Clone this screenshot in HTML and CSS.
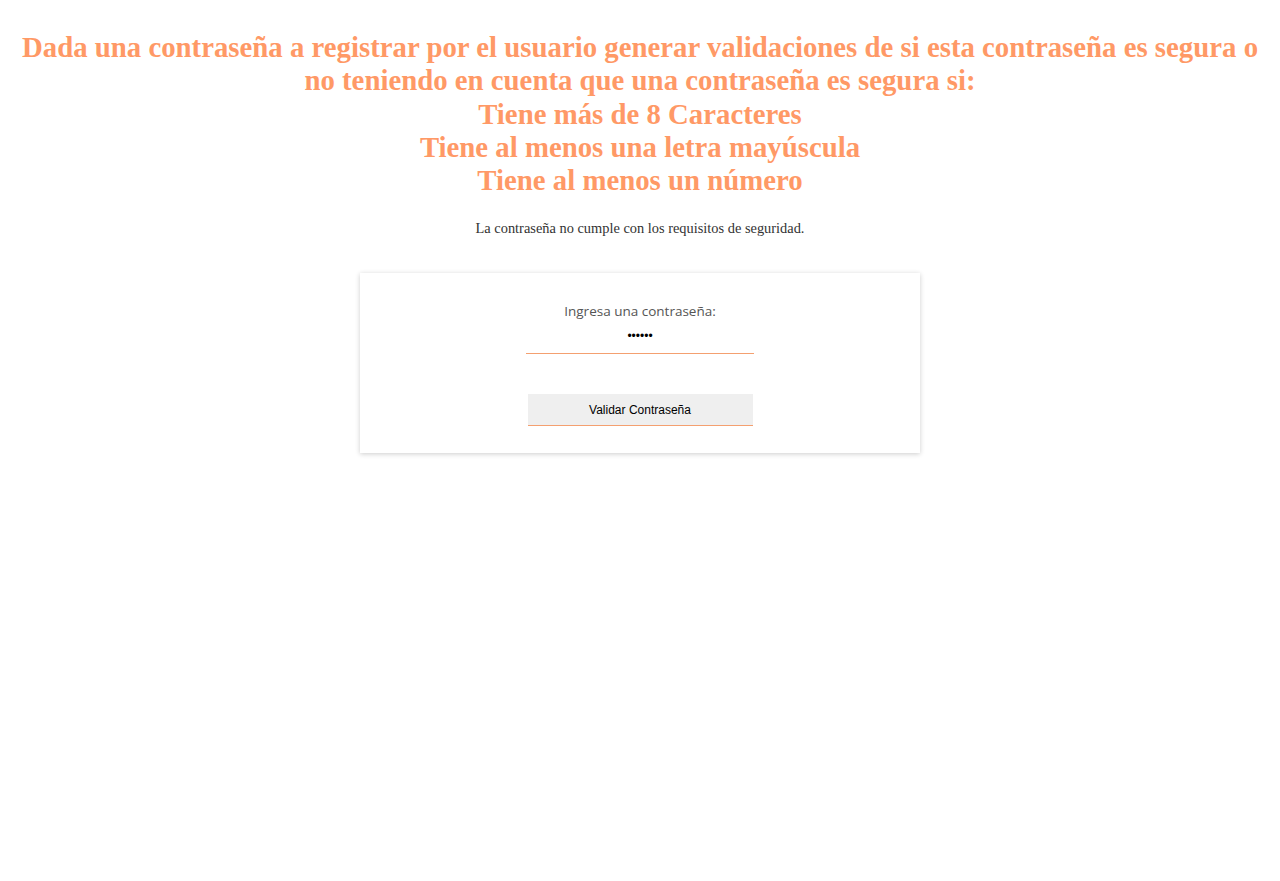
FILE: index.html
```html
<!DOCTYPE html>
<html lang="es">
<head>
<meta charset="utf-8">
<title>Validar contraseña</title>
<link rel="stylesheet" href="styles.css">
</head>
<body>
<h1 class="title">Dada una contraseña a registrar por el usuario generar validaciones de si esta contraseña es segura o no teniendo en cuenta que una contraseña es segura si:<br>Tiene más de 8 Caracteres<br>Tiene al menos una letra mayúscula<br>Tiene al menos un número</h1>
<p class="result">La contraseña no cumple con los requisitos de seguridad.</p>
<div class="card">
  <label class="label" for="pwd">Ingresa una contraseña:</label>
  <input class="input" id="pwd" type="password" value="abc123">
  <button class="button" type="button">Validar Contraseña</button>
</div>
</body>
</html>
```
FILE: styles.css
```css
body {
  margin: 0;
  padding: 31px 8px 40px;
  background: #fff;
  font-family: "Liberation Serif", "Times New Roman", serif;
}
.title {
  margin: 0;
  text-align: center;
  color: #ff9966;
  font-size: 28.8px;
  line-height: 33.3px;
  font-weight: bold;
}
.result {
  margin: 23px 0 0;
  text-align: center;
  font-size: 14.4px;
  line-height: 17px;
  color: #333;
}
.card {
  width: 560px;
  margin: 36px auto 0;
  box-sizing: border-box;
  padding: 29px 0 27px;
  background: #fff;
  box-shadow: 0 1px 5px rgba(0,0,0,0.2);
  display: flex;
  flex-direction: column;
  align-items: center;
}
.label {
  font-family: "Open Sans", "Noto Sans", sans-serif;
  font-size: 13.5px;
  line-height: 18px;
  color: #555;
}
.input {
  margin-top: 5px;
  width: 228px;
  height: 29px;
  box-sizing: border-box;
  border: none;
  border-bottom: 1px solid #f4a070;
  outline: none;
  text-align: center;
  font-size: 12px;
  padding: 0 0 6px;
  background: transparent;
  color: #000;
}
.button {
  margin-top: 40px;
  width: 225px;
  height: 32px;
  box-sizing: border-box;
  border: none;
  border-bottom: 1px solid #f4a070;
  background: #efefef;
  font-family: "Liberation Sans", Arial, sans-serif;
  font-size: 12px;
  color: #000;
  padding: 0;
}
```
